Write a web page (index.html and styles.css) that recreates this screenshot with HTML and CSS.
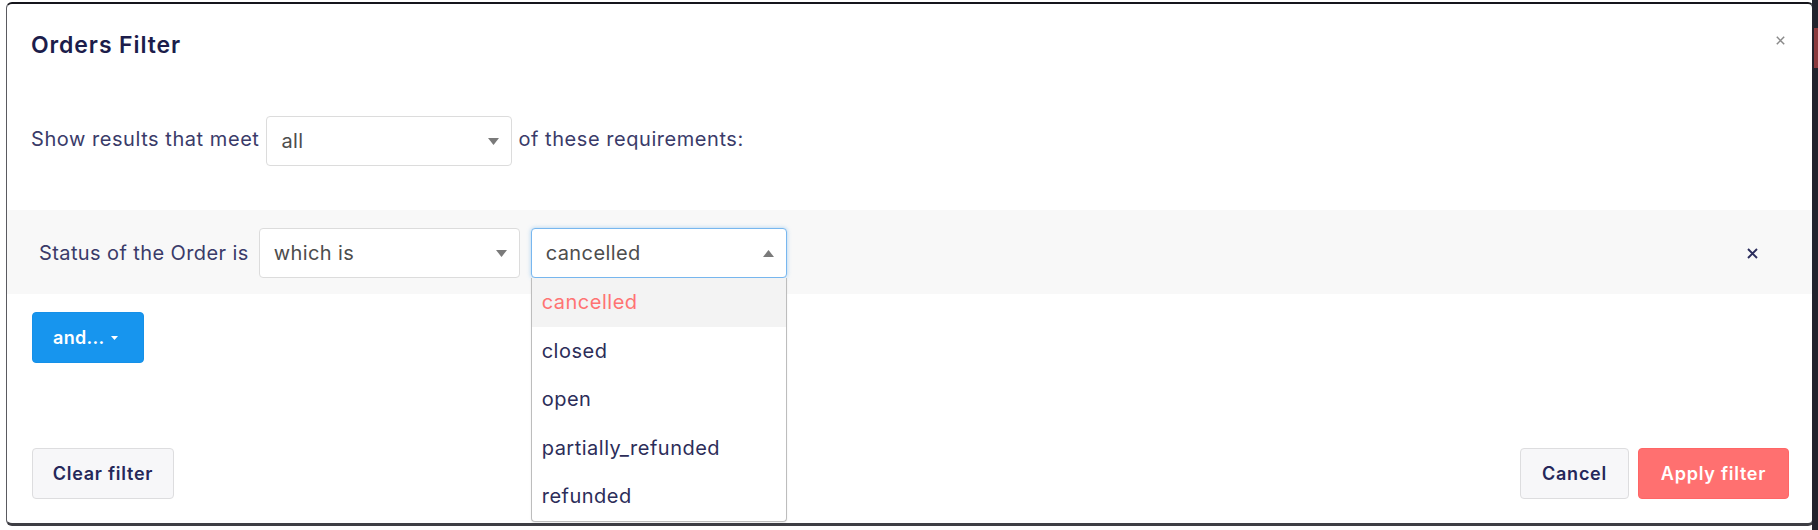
FILE: index.html
```html
<!DOCTYPE html>
<html lang="en">
<head>
<meta charset="utf-8">
<title>Orders Filter</title>
<link rel="stylesheet" href="styles.css">
</head>
<body>
<div class="modal">
  <div class="modal-header">
    <h4 class="modal-title">Orders Filter</h4>
    <button class="close" aria-label="Close">
      <svg width="9" height="9" viewBox="0 0 9 9"><path d="M0.8 0.8L8.2 8.2M8.2 0.8L0.8 8.2" stroke="#8a8a8a" stroke-width="1.5" fill="none"/></svg>
    </button>
  </div>

  <div class="match-row">
    <span class="label">Show results that meet</span>
    <div class="select select-match">
      <span class="select-value">all</span>
      <svg class="caret" width="11" height="7" viewBox="0 0 11 7"><path d="M0 0H11L5.5 7Z" fill="#7a7a7a"/></svg>
    </div>
    <span class="label">of these requirements:</span>
  </div>

  <div class="rule-row">
    <span class="label rule-label">Status of the Order is</span>
    <div class="select select-op">
      <span class="select-value">which is</span>
      <svg class="caret" width="11" height="7" viewBox="0 0 11 7"><path d="M0 0H11L5.5 7Z" fill="#7a7a7a"/></svg>
    </div>
    <div class="select select-val is-open">
      <span class="select-value">cancelled</span>
      <svg class="caret" width="11" height="7" viewBox="0 0 11 7"><path d="M0 7H11L5.5 0Z" fill="#7a7a7a"/></svg>
      <ul class="menu">
        <li class="menu-item active">cancelled</li>
        <li class="menu-item">closed</li>
        <li class="menu-item">open</li>
        <li class="menu-item">partially_refunded</li>
        <li class="menu-item">refunded</li>
      </ul>
    </div>
    <button class="remove" aria-label="Remove">
      <svg width="11" height="11" viewBox="0 0 11 11"><path d="M1 1L10 10M10 1L1 10" stroke="#2b2d5c" stroke-width="1.9" fill="none"/></svg>
    </button>
  </div>

  <div class="add-row">
    <button class="btn btn-primary">and...<svg class="btn-caret" width="7" height="4" viewBox="0 0 7 4"><path d="M0 0H7L3.5 4Z" fill="#fff"/></svg></button>
  </div>

  <div class="modal-footer">
    <button class="btn btn-default">Clear filter</button>
    <div class="footer-right">
      <button class="btn btn-default">Cancel</button>
      <button class="btn btn-danger">Apply filter</button>
    </div>
  </div>
</div>
</body>
</html>
```
FILE: styles.css
```css
* { box-sizing: border-box; }

html, body { height: 100%; }

body {
  margin: 0;
  padding: 2px 0 0 6px;
  font-family: "Inter", "Liberation Sans", sans-serif;
  background:
    linear-gradient(#8b3a3e, #8b3a3e) 1814px 28px / 4px 40px no-repeat,
    linear-gradient(90deg, #ffffff 0 1812px, #22232d 1812px);
  overflow: hidden;
}

.modal {
  position: relative;
  width: 1808px;
  height: 524px;
  background: #fff;
  border-top: 2px solid #15151c;
  border-left: 1px solid #5a5a60;
  border-right: 2px solid #22232d;
  border-bottom: 3px solid #3e3e44;
  border-radius: 6px;
  display: flex;
  flex-direction: column;
}

.modal-header {
  position: relative;
  padding: 27px 24px 0 24px;
  height: 112px;
}

.modal-title {
  margin: 0;
  font-size: 23px;
  line-height: 28px;
  font-weight: 600;
  letter-spacing: 0.9px;
  color: #1c1d4b;
}

.close {
  position: absolute;
  top: 32px;
  right: 27px;
  width: 9px;
  height: 9px;
  padding: 0;
  border: 0;
  background: none;
  display: block;
}
.close svg { display: block; }

.label {
  font-size: 20px;
  letter-spacing: 0.55px;
  color: #3a3b69;
  white-space: nowrap;
}

.match-row {
  display: flex;
  align-items: center;
  height: 50px;
  padding-left: 24px;
}
.match-row .label { padding-bottom: 4px; }

.select {
  position: relative;
  height: 50px;
  background: #fff;
  border: 1px solid #dcdcdc;
  border-radius: 4px;
  display: flex;
  align-items: center;
  padding-left: 14px;
}
.select-value {
  font-size: 20px;
  letter-spacing: 0.4px;
  color: #4d4d4d;
}
.caret {
  position: absolute;
  right: 12px;
  top: 21px;
}

.select-match { width: 246px; margin: 0 6px 0 7px; }

.rule-row {
  margin-top: 44px;
  height: 84px;
  background: #f8f8f8;
  display: flex;
  align-items: center;
  padding: 2px 0 0 32px;
}
.rule-row .label { letter-spacing: 0.4px; }
.rule-label { margin-right: 10px; }
.select-op { width: 261px; margin-right: 11px; }
.select-val {
  width: 256px;
  border-color: #78b7ef;
  box-shadow: 0 0 4px rgba(102, 175, 233, 0.55);
}

.menu {
  position: absolute;
  top: 49px;
  left: -1px;
  width: 256px;
  margin: 0;
  padding: 0;
  list-style: none;
  background: #fff;
  border: 1px solid #bdbdbd;
  border-top: 0;
  border-radius: 0 0 4px 4px;
  box-shadow: 0 1px 2px rgba(0,0,0,0.08);
  z-index: 5;
}
.menu-item {
  height: 48.5px;
  display: flex;
  align-items: center;
  padding-left: 10px;
  font-size: 20px;
  letter-spacing: 0.5px;
  color: #2c2d59;
}
.menu-item.active {
  background: #f3f3f3;
  color: #ff7373;
}

.remove {
  margin-left: auto;
  margin-right: 54px;
  padding: 0;
  border: 0;
  background: none;
  width: 11px;
  height: 11px;
}
.remove svg { display: block; }

.add-row {
  margin-top: 18px;
  padding-left: 25px;
}

.btn {
  height: 51px;
  border-radius: 4px;
  font-family: "Inter", "Liberation Sans", sans-serif;
  font-size: 18px;
  font-weight: 600;
  letter-spacing: 0.75px;
  display: inline-flex;
  align-items: center;
  justify-content: center;
  padding: 0;
  cursor: pointer;
}

.btn-primary {
  width: 112px;
  justify-content: flex-start;
  padding-left: 20px;
  background: #1795ee;
  border: 1px solid #1590e8;
  color: #fff;
  letter-spacing: 0.3px;
}
.btn-caret { margin-left: 6px; margin-top: 1px; }

.modal-footer {
  margin-top: auto;
  padding: 0 23px 24px 25px;
  display: flex;
  justify-content: space-between;
  align-items: center;
}
.footer-right { display: flex; gap: 9px; }

.btn-default {
  background: #f7f7f9;
  border: 1px solid #dddddf;
  color: #25275a;
}
.footer-right .btn-default { width: 109px; }
.modal-footer > .btn-default { width: 142px; }

.btn-danger {
  width: 151px;
  background: #ff7070;
  border: 1px solid #ff6666;
  color: #fff;
}
```
